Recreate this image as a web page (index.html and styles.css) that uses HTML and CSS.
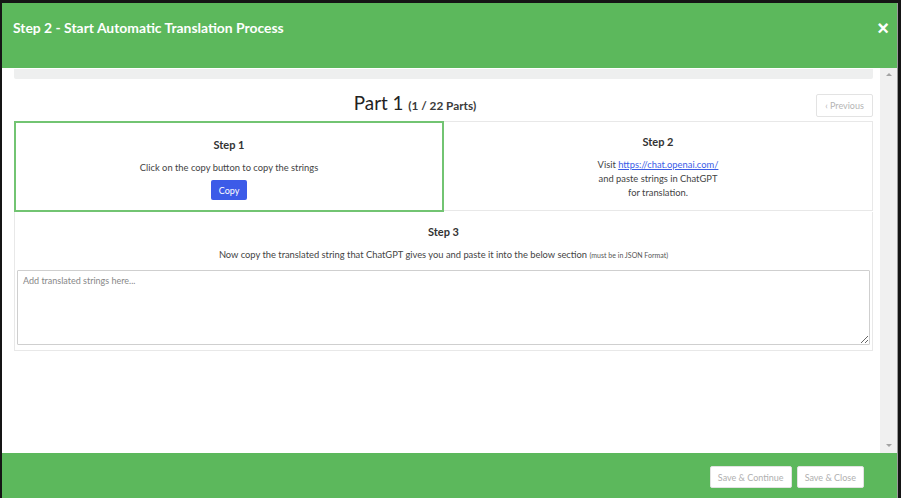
FILE: index.html
```html
<!DOCTYPE html>
<html lang="en">
<head>
<meta charset="utf-8">
<title>Step 2 - Start Automatic Translation Process</title>
<link rel="stylesheet" href="styles.css">
</head>
<body>
<div class="frame">
  <div class="modal">
    <header class="modal-header">
      <h1 class="modal-title">Step 2 - Start Automatic Translation Process</h1>
      <button class="close" type="button">&times;</button>
    </header>
    <div class="modal-main">
      <div class="content">
        <div class="top-strip"></div>
        <div class="part-row">
          <h2 class="part-title">Part 1 <small>(1 / 22 Parts)</small></h2>
          <button class="btn-prev" type="button">&lsaquo; Previous</button>
        </div>
        <div class="steps">
          <div class="step step-active">
            <h3 class="step-title">Step 1</h3>
            <p class="step-text">Click on the copy button to copy the strings</p>
            <button class="btn-copy" type="button">Copy</button>
          </div>
          <div class="step step-two">
            <h3 class="step-title">Step 2</h3>
            <p class="step-text lines">Visit <a href="#">https://chat.openai.com/</a><br>and paste strings in ChatGPT<br>for translation.</p>
          </div>
        </div>
        <div class="step step-three">
          <h3 class="step-title">Step 3</h3>
          <p class="step-text">Now copy the translated string that ChatGPT gives you and paste it into the below section <small>(must be in JSON Format)</small></p>
          <textarea class="input" placeholder="Add translated strings here..."></textarea>
        </div>
      </div>
      <div class="scrollbar">
        <span class="arrow up"></span>
        <span class="arrow down"></span>
      </div>
    </div>
    <footer class="modal-footer">
      <button class="btn-foot" type="button">Save &amp; Continue</button>
      <button class="btn-foot" type="button">Save &amp; Close</button>
    </footer>
  </div>
</div>
</body>
</html>
```

FILE: styles.css
```css
* { box-sizing: border-box; }
html, body { margin: 0; padding: 0; }
body {
  width: 901px;
  height: 498px;
  overflow: hidden;
  background: #111;
  font-family: Lato, "Open Sans", sans-serif;
  color: #333;
}
.frame {
  height: 498px;
  padding: 3px 3px 0 2px;
  background: #151515;
}
.modal {
  height: 495px;
  display: flex;
  flex-direction: column;
  background: #fff;
  border-right: 1px solid #9a9a9a;
}
.modal-header {
  height: 65px;
  background: #5cb85c;
  display: flex;
  align-items: flex-start;
  justify-content: space-between;
  padding: 17px 8px 0 11px;
}
.modal-title {
  margin: 0;
  color: #fff;
  font-size: 13.9px;
  font-weight: 700;
  line-height: 16px;
}
.close {
  border: 0;
  background: none;
  color: #fff;
  font-size: 20px;
  font-weight: 700;
  line-height: 16px;
  padding: 0;
  font-family: Arial, "Liberation Sans", sans-serif;
}
.modal-main {
  flex: 1;
  display: flex;
  min-height: 0;
  background: #fff;
}
.content {
  flex: 1;
  padding: 1px 7px 0 12px;
}
.top-strip {
  height: 10px;
  background: #eeefef;
  border-radius: 0 0 2px 2px;
}
.part-row {
  display: flex;
  align-items: center;
  margin-top: 15px;
  height: 23px;
}
.part-title {
  flex: 1;
  margin: -6px 0 0;
  text-align: center;
  font-size: 18.8px;
  font-weight: 400;
  color: #222;
}
.part-title small {
  font-size: 11.8px;
  font-weight: 700;
  color: #3a3a3a;
}
.btn-prev {
  width: 57px;
  height: 23px;
  background: #fff;
  border: 1px solid #e3e3e3;
  border-radius: 2px;
  color: #b5b5b5;
  font-family: inherit;
  font-size: 9px;
  padding: 0;
}
.steps {
  display: grid;
  grid-template-columns: 430px 1fr;
  margin-top: 4px;
}
.step {
  text-align: center;
  border: 1px solid #e8e8e8;
}
.step-active {
  height: 91px;
  border: 2px solid #72c472;
  padding-top: 14px;
}
.step-two {
  height: 90px;
  border-left: 0;
  padding-top: 12px;
}
.step-title {
  margin: 0;
  font-size: 11px;
  font-weight: 700;
  color: #333;
  line-height: 16px;
}
.step-text {
  margin: 8px 0 0;
  font-size: 9.35px;
  line-height: 14px;
  color: #444;
}
.step-text a { color: #3b5de7; }
.step-text small { font-size: 7px; color: #555; }
.btn-copy {
  margin-top: 5px;
  width: 36px;
  height: 20px;
  border: 0;
  border-radius: 2px;
  background: #3c5be8;
  color: #fff;
  font-family: inherit;
  font-size: 9px;
  padding: 0;
}
.step-three {
  border-top: 0;
  height: 139px;
  padding: 12px 2px 0;
}
.step-three .step-text { margin-top: 8px; }
.input {
  display: block;
  width: 100%;
  height: 75px;
  margin-top: 8px;
  border: 1px solid #cfcfcf;
  border-radius: 1px;
  padding: 4px 5px;
  font-family: inherit;
  font-size: 9px;
  resize: vertical;
}
.input::placeholder { color: #888; }
.scrollbar {
  width: 17px;
  background: #f0f0f0;
  display: flex;
  flex-direction: column;
  justify-content: space-between;
  align-items: center;
  padding: 5px 0 6px;
}
.arrow {
  width: 0;
  height: 0;
  border-left: 3px solid transparent;
  border-right: 3px solid transparent;
}
.arrow.up { border-bottom: 3px solid #a3a3a3; }
.arrow.down { border-top: 3px solid #a3a3a3; }
.modal-footer {
  height: 45px;
  background: #5cb85c;
  display: flex;
  justify-content: flex-end;
  align-items: flex-start;
  gap: 5px;
  padding: 13px 33px 0 0;
}
.btn-foot {
  height: 22px;
  background: #fff;
  border: 1px solid #e2e2e2;
  border-radius: 2px;
  color: #b0b0b0;
  font-family: inherit;
  font-size: 9px;
  padding: 0 7px;
}
```
